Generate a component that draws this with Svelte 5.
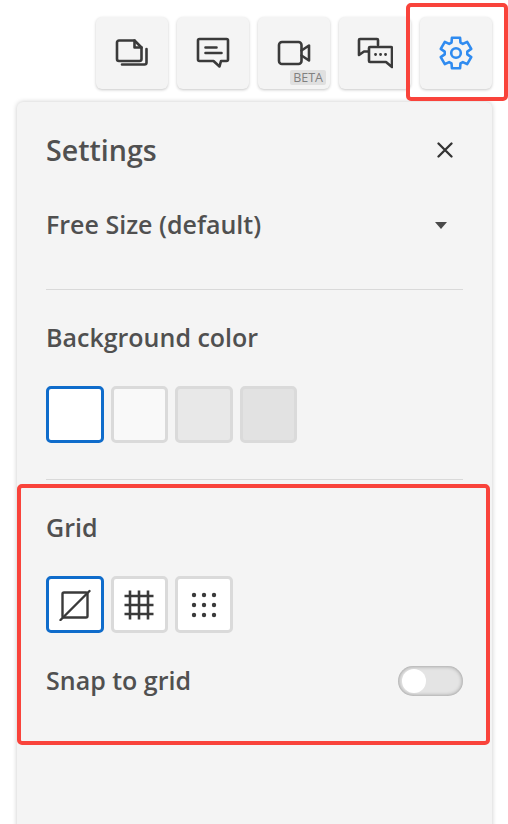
<script>
	let tools = ['doc', 'note', 'video', 'chat', 'gear'];
	let colors = ['#ffffff', '#f9f9f9', '#e8e8e8', '#e2e2e2'];
	let snap = false;

	// six tooth cog outline, first tooth points up
	function cogPoints() {
		let pts = [];
		for (let k = 0; k < 6; k++) {
			let a = -90 + k * 60;
			for (let [d, r] of [[-23, 11.4], [-15, 15.8], [15, 15.8], [23, 11.4]]) {
				let t = ((a + d) * Math.PI) / 180;
				pts.push((17 + r * Math.cos(t)).toFixed(2) + ',' + (17 + r * Math.sin(t)).toFixed(2));
			}
		}
		return pts.join(' ');
	}
</script>

<main>
	<div class="toolbar">
		{#each tools as t}
			<button class="tool" class:active={t === 'gear'}>
				{#if t === 'doc'}
					<svg width="34" height="30" viewBox="0 0 34 30" fill="none" stroke="#3a3a3a" stroke-width="2.6" stroke-linejoin="round" stroke-linecap="round">
						<path d="M2 4.500a2 2 0 0 1 2-2h15.500l7 7v11.500a2 2 0 0 1-2 2H4a2 2 0 0 1-2-2z" />
						<path d="M19.500 2.500v7h7" />
						<path d="M31.500 11v13.500a2 2 0 0 1-2 2H7" />
					</svg>
				{:else if t === 'note'}
					<svg width="34" height="32" viewBox="0 0 34 32" fill="none" stroke="#3a3a3a" stroke-width="2.6" stroke-linejoin="round" stroke-linecap="round">
						<path d="M3.500 2h27a1.500 1.500 0 0 1 1.500 1.500v19a1.500 1.500 0 0 1-1.500 1.500H25l-1.500 5.500-6-5.500H3.500A1.500 1.500 0 0 1 2 22.500v-19A1.500 1.500 0 0 1 3.500 2z" />
						<path d="M9.500 10.500h11M9.500 16h16" />
					</svg>
				{:else if t === 'video'}
					<svg width="34" height="26" viewBox="0 0 34 26" fill="none" stroke="#3a3a3a" stroke-width="2.6" stroke-linejoin="round" stroke-linecap="round">
						<rect x="2" y="2" width="22.500" height="22" rx="3" />
						<path d="M24.500 10.500 32 5.500v15l-7.500-5" />
					</svg>
					<span class="beta">BETA</span>
				{:else if t === 'chat'}
					<svg width="36" height="32" viewBox="0 0 36 32" fill="none" stroke="#3a3a3a" stroke-width="2.6" stroke-linejoin="round" stroke-linecap="round">
						<path d="M11 14.500H7l-5 3.500V3a1 1 0 0 1 1-1h17a1 1 0 0 1 1 1v5" />
						<path d="M13 10h21a1 1 0 0 1 1 1v19l-6-5H13a1 1 0 0 1-1-1V11a1 1 0 0 1 1-1z" />
						<path d="M18.500 17.500h.1M23.500 17.500h.1M28.500 17.500h.1" stroke-width="2.800" />
					</svg>
				{:else}
					<svg width="34" height="34" viewBox="0 0 34 34" fill="none" stroke="#2f8bf0" stroke-width="2.6" stroke-linejoin="round">
						<circle cx="17" cy="17" r="4.800" />
						<polygon points={cogPoints()} />
					</svg>
					<span class="mark gear-mark"></span>
				{/if}
			</button>
		{/each}
	</div>

	<section class="panel">
		<header class="head">
			<h1>Settings</h1>
			<svg class="close" width="16" height="16" viewBox="0 0 16 16" stroke="#333" stroke-width="2.300" stroke-linecap="round">
				<path d="M1.500 1.500l13 13M14.500 1.500l-13 13" />
			</svg>
		</header>

		<div class="select">
			<span>Free Size (default)</span>
			<i class="caret"></i>
		</div>

		<hr />

		<h2>Background color</h2>
		<div class="swatches">
			{#each colors as c, i}
				<div class="swatch" class:selected={i === 0} style="background: {c}"></div>
			{/each}
		</div>

		<hr class="second" />

		<div class="grid-section">
			<span class="mark grid-mark"></span>
			<h2>Grid</h2>
			<div class="swatches grids">
				<button class="swatch selected">
					<svg width="32" height="32" viewBox="0 0 32 32" fill="none" stroke="#3a3a3a" stroke-width="2.400" stroke-linecap="round" stroke-linejoin="round">
						<rect x="3.500" y="3.500" width="25" height="25" rx="1.500" />
						<path d="M1.500 31 30.500 2" />
					</svg>
				</button>
				<button class="swatch">
					<svg width="32" height="32" viewBox="0 0 32 32" fill="none" stroke="#3a3a3a" stroke-width="2.600">
						<path d="M7 1.500v29M16 1.500v29M25 1.500v29M1.500 7h29M1.500 16h29M1.500 25h29" />
					</svg>
				</button>
				<button class="swatch">
					<svg width="32" height="32" viewBox="0 0 32 32" fill="#3a3a3a">
						{#each [6, 16, 26] as y}
							{#each [6, 16, 26] as x}
								<circle cx={x} cy={y} r="2.200" />
							{/each}
						{/each}
					</svg>
				</button>
			</div>
			<div class="snap">
				<span>Snap to grid</span>
				<button class="toggle" class:on={snap} aria-label="Snap to grid" onclick={() => (snap = !snap)}></button>
			</div>
		</div>
	</section>
</main>

<style>
	:global(body) {
		background: #fff;
		overflow: hidden;
	}

	main {
		width: 508px;
		height: 824px;
		overflow: hidden;
		font-family: "Open Sans", sans-serif;
		color: #505050;
	}

	button {
		padding: 0;
		font: inherit;
		cursor: pointer;
	}

	.toolbar {
		display: flex;
		justify-content: flex-end;
		gap: 9px;
		padding: 17px 16px 0 0;
		height: 102px;
		box-sizing: border-box;
	}

	.tool {
		position: relative;
		width: 72px;
		height: 72px;
		display: flex;
		align-items: center;
		justify-content: center;
		background: #f4f4f4;
		border: 0;
		border-radius: 6px;
		box-shadow: 0 1px 3px rgba(0, 0, 0, 0.22);
	}

	.beta {
		position: absolute;
		right: 4px;
		bottom: 4px;
		padding: 0 3px;
		font-size: 12.5px;
		line-height: 15px;
		font-weight: 500;
		color: #808080;
		background: #e0e0e0;
		border-radius: 2px;
	}

	.mark {
		position: absolute;
		border: 4px solid #f9433b;
		border-radius: 5px;
		pointer-events: none;
	}

	.gear-mark {
		left: -14px;
		top: -14px;
		width: 94px;
		height: 90px;
	}

	.panel {
		width: 475px;
		height: 740px;
		margin-left: 17px;
		padding: 0 29px;
		box-sizing: border-box;
		background: #f4f4f4;
		border-radius: 6px 6px 0 0;
		box-shadow: 0 0 5px rgba(0, 0, 0, 0.22);
	}

	.head {
		display: flex;
		align-items: center;
		justify-content: space-between;
		height: 96px;
	}

	h1 {
		margin: 0 0 2px;
		font-size: 28.6px;
		font-weight: 600;
	}

	.close {
		margin-right: 10px;
	}

	.select {
		display: flex;
		align-items: center;
		justify-content: space-between;
		height: 54px;
		font-size: 25px;
		font-weight: 600;
	}

	.select span {
		margin-bottom: 2px;
	}

	.caret {
		width: 0;
		height: 0;
		margin-right: 16px;
		border: 6px solid transparent;
		border-top: 7px solid #4a4a4a;
		border-bottom: 0;
	}

	hr {
		height: 1px;
		margin: 37px 0 0;
		border: 0;
		background: #d9d9d9;
	}

	hr.second {
		margin-top: 36px;
	}

	h2 {
		margin: 0;
		font-size: 25px;
		font-weight: 600;
		line-height: 30px;
	}

	hr + h2 {
		margin-top: 32px;
	}

	.swatches {
		display: flex;
		gap: 7px;
		margin-top: 34px;
	}

	.swatch {
		width: 57.5px;
		height: 57px;
		box-sizing: border-box;
		display: flex;
		align-items: center;
		justify-content: center;
		border: 3px solid #dadada;
		border-radius: 5px;
		background: #fff;
	}

	.swatch.selected {
		border-color: #0f6ccb;
	}

	.grid-section {
		position: relative;
		padding-top: 32px;
	}

	.grid-mark {
		left: -29px;
		top: 4px;
		width: 465px;
		height: 253px;
	}

	.snap {
		display: flex;
		align-items: center;
		justify-content: space-between;
		margin-top: 30px;
		font-size: 25px;
		font-weight: 600;
	}

	.toggle {
		position: relative;
		width: 65px;
		height: 30px;
		margin-top: 2px;
		border: 0;
		border-radius: 15px;
		background: #e4e4e4;
		box-shadow: inset 0 0 4px rgba(0, 0, 0, 0.4);
	}

	.toggle::after {
		content: "";
		position: absolute;
		left: 4px;
		top: 3px;
		width: 24px;
		height: 24px;
		border-radius: 50%;
		background: #fff;
	}

	.toggle.on::after {
		left: 37px;
	}
</style>
